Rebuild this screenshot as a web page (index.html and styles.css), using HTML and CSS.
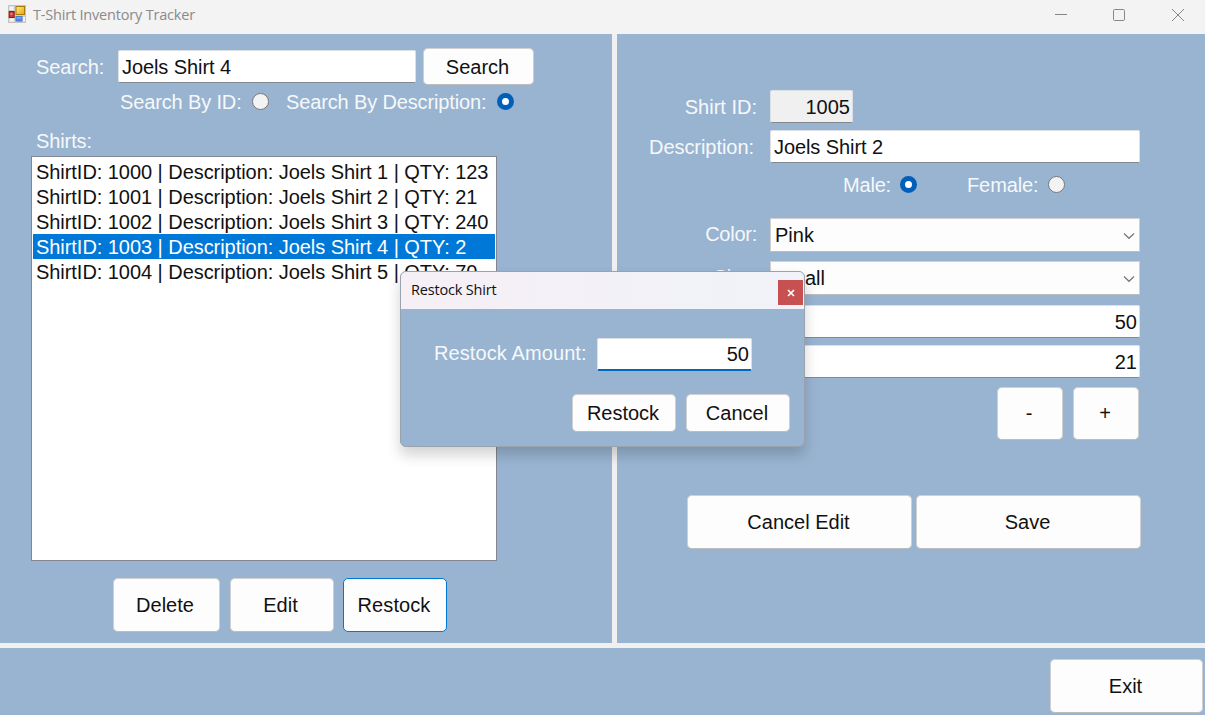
FILE: index.html
```html
<!DOCTYPE html>
<html lang="en">
<head>
<meta charset="utf-8">
<title>T-Shirt Inventory Tracker</title>
<link rel="stylesheet" href="styles.css">
</head>
<body>
<div class="window">
  <header class="titlebar">
    <svg class="app-icon" width="18" height="18" viewBox="0 0 18 18">
      <defs>
        <linearGradient id="gold" x1="0" y1="0" x2="1" y2="1"><stop offset="0" stop-color="#ffe88a"/><stop offset="1" stop-color="#e8a800"/></linearGradient>
        <linearGradient id="blue" x1="0" y1="0" x2="0" y2="1"><stop offset="0" stop-color="#8ab8f8"/><stop offset="1" stop-color="#3a74dc"/></linearGradient>
      </defs>
      <rect x="0.5" y="0.5" width="17" height="17" fill="#cfcfcf" stroke="#c4c4c4"/>
      <rect x="1.5" y="1.5" width="4" height="3.5" fill="#f4f4f4"/>
      <rect x="1.5" y="13.5" width="4.5" height="3" fill="#f4f4f4"/>
      <rect x="15" y="12" width="2" height="4.5" fill="#f4f4f4"/>
      <rect x="1.2" y="6.5" width="5" height="6" fill="#cc3a30" stroke="#8e1c16"/>
      <rect x="2.5" y="8" width="1.8" height="2" fill="#ee8a80"/>
      <rect x="8" y="1.5" width="8.5" height="8" fill="url(#gold)" stroke="#a87808"/>
      <rect x="8" y="11.5" width="6" height="4.5" fill="url(#blue)" stroke="#4a7cd0"/>
    </svg>
    <span class="title">T-Shirt Inventory Tracker</span>
    <svg class="controls" width="130" height="14" viewBox="0 0 130 14" fill="none" stroke="#868686">
      <path d="M0 7.5H12"/>
      <rect x="58.5" y="2.5" width="11" height="11" rx="1.2"/>
      <path d="M117 2L129 14M129 2L117 14"/>
    </svg>
  </header>

  <main class="panes">
    <section class="pane list-pane">
      <div class="search-row">
        <span class="label search-label">Search:</span>
        <div class="field search-field">Joels Shirt 4</div>
        <div class="button search-button">Search</div>
      </div>
      <div class="search-mode">
        <span class="label by-id">Search By ID:</span><i class="radio"></i>
        <span class="label by-desc">Search By Description:</span><i class="radio on"></i>
      </div>
      <div class="label list-label">Shirts:</div>
      <div class="listbox">
        <div class="item">ShirtID: 1000 | Description: Joels Shirt 1 | QTY: 123</div>
        <div class="item">ShirtID: 1001 | Description: Joels Shirt 2 | QTY: 21</div>
        <div class="item">ShirtID: 1002 | Description: Joels Shirt 3 | QTY: 240</div>
        <div class="item selected">ShirtID: 1003 | Description: Joels Shirt 4 | QTY: 2</div>
        <div class="item">ShirtID: 1004 | Description: Joels Shirt 5 | QTY: 70</div>
      </div>
      <div class="list-actions">
        <div class="button delete">Delete</div>
        <div class="button edit">Edit</div>
        <div class="button restock focused">Restock</div>
      </div>
    </section>

    <section class="pane form-pane">
      <div class="form">
        <span class="label">Shirt ID:</span>
        <div class="field readonly number">1005</div>
        <span class="label desc-label">Description:</span>
        <div class="field">Joels Shirt 2</div>
        <div class="gender">
          <span class="label male">Male:</span><i class="radio on"></i>
          <span class="label female">Female:</span><i class="radio"></i>
        </div>
        <span class="label narrow">Color:</span>
        <div class="combo">Pink<svg width="12" height="8" viewBox="0 0 12 8" fill="none" stroke="#777" stroke-width="1.2"><path d="M1 1.5L6 6.3L11 1.5"/></svg></div>
        <span class="label narrow">Size:</span>
        <div class="combo">Small<svg width="12" height="8" viewBox="0 0 12 8" fill="none" stroke="#777" stroke-width="1.2"><path d="M1 1.5L6 6.3L11 1.5"/></svg></div>
        <div class="field number price">50</div>
        <div class="field number quantity">21</div>
      </div>
      <div class="stepper">
        <div class="button">-</div>
        <div class="button">+</div>
      </div>
      <div class="form-actions">
        <div class="button">Cancel Edit</div>
        <div class="button">Save</div>
      </div>
    </section>
  </main>

  <footer class="footer">
    <div class="button exit">Exit</div>
  </footer>

  <div class="dialog">
    <div class="dialog-title">
      <span>Restock Shirt</span>
      <div class="close"><svg width="8" height="8" viewBox="0 0 8 8" stroke="#fff" stroke-width="1.7"><path d="M1 1L7 7M7 1L1 7"/></svg></div>
    </div>
    <div class="dialog-body">
      <div class="amount-row">
        <span class="label">Restock Amount:</span>
        <div class="field number active">50</div>
      </div>
      <div class="dialog-actions">
        <div class="button">Restock</div>
        <div class="button">Cancel</div>
      </div>
    </div>
  </div>
</div>
</body>
</html>
```

FILE: styles.css
```css
* { box-sizing: border-box; }

body {
  margin: 0;
  font-family: "Liberation Sans", Arial, sans-serif;
  font-size: 20px;
  line-height: 25px;
  color: #111;
  white-space: nowrap;
}

.window {
  position: relative;
  display: flex;
  flex-direction: column;
  width: 1205px;
  height: 715px;
  overflow: hidden;
  background: #f0f0f0;
}

.titlebar {
  display: flex;
  align-items: flex-start;
  height: 34px;
  padding: 5px 20px 0 8px;
  background: #f3f3f3;
}
.title {
  margin-left: 7px;
  font: 14.5px/20px "Open Sans", "Noto Sans", sans-serif;
  letter-spacing: -0.19px;
  color: #8a8a8a;
}
.controls { margin: 2px 0 0 auto; }

.panes {
  display: grid;
  grid-template-columns: 612px 588px;
  gap: 5px;
  height: 609px;
}
.pane { background: #99b4d1; }
.label { color: #f6f8fa; }

/* Shared controls */
.field {
  display: flex;
  align-items: center;
  height: 33px;
  padding: 1px 3px 0;
  background: #fff;
  border: 1px solid #dcdfe3;
  border-bottom-color: #84898f;
  border-radius: 2px;
  letter-spacing: -0.08px;
}
.number {
  justify-content: flex-end;
  padding-right: 2px;
  letter-spacing: 0;
}
.readonly { width: 83px; background: #f0f0f0; }
.button {
  display: flex;
  align-items: center;
  justify-content: center;
  height: 54px;
  padding-right: 2px;
  background: #fdfdfd;
  border: 1px solid #d0d0d0;
  border-bottom-color: #bcbcbc;
  border-radius: 5px;
}
.focused { border-color: #0078d4; }
.radio {
  width: 17px;
  height: 17px;
  border: 1px solid #777;
  border-radius: 50%;
  background: #f3f3f3;
}
.radio.on { border: 5.5px solid #005fb8; background: #fff; }
.combo {
  display: flex;
  align-items: center;
  justify-content: space-between;
  height: 34px;
  padding: 1px 4px 0;
  background: #fdfdfd;
  border: 1px solid #d0d0d0;
  border-bottom-color: #bcbcbc;
}

/* Left pane */
.list-pane { padding: 14px 0 0 31px; }
.search-row { display: flex; align-items: center; height: 37px; }
.search-label { width: 87px; padding: 1px 0 0 5px; letter-spacing: -0.1px; }
.search-field { width: 298px; margin-top: -1px; padding-top: 2px; }
.search-button { width: 111px; height: 37px; margin-left: 7px; padding-top: 1px; }
.search-mode {
  display: flex;
  align-items: center;
  height: 25px;
  margin-top: 5px;
  padding-left: 89px;
}
.search-mode .radio { margin-top: -3px; }
.by-id { width: 132px; letter-spacing: -0.14px; }
.by-desc { width: 211px; margin-left: 17px; letter-spacing: -0.14px; }
.list-label { margin: 14px 0 2px 5px; letter-spacing: -0.1px; }
.listbox {
  width: 466px;
  height: 405px;
  padding: 2px 1px;
  background: #fff;
  border: 1px solid #82878f;
}
.item {
  height: 25px;
  padding-left: 3px;
  line-height: 27px;
  letter-spacing: -0.05px;
}
.selected { background: #0078d7; color: #fff; }
.list-actions { display: flex; gap: 10px; margin: 17px 0 0 82px; }
.delete { width: 107px; padding-right: 3px; }
.edit { width: 104px; padding-right: 3px; }
.restock { width: 104px; margin-left: -1px; letter-spacing: 0.1px; }

/* Right pane */
.form-pane { padding-top: 56px; }
.form {
  display: grid;
  grid-template-columns: 140px 370px;
  grid-template-rows: 40px 42px 46px 43px 44px 40px 33px;
  column-gap: 13px;
  align-items: start;
}
.form > .label { padding-top: 5px; text-align: right; }
.form > .desc-label { padding-right: 3px; letter-spacing: -0.05px; }
.form > .narrow { padding-top: 4px; letter-spacing: -0.25px; }
.gender {
  grid-column: 2;
  display: flex;
  align-items: center;
  height: 25px;
  margin-top: 1px;
  padding-left: 73px;
}
.gender .radio { margin-top: -3px; }
.male { width: 57px; letter-spacing: -0.2px; }
.female { width: 81px; margin-left: 50px; letter-spacing: -0.1px; }
.price, .quantity { grid-column: 2; }
.stepper { display: flex; gap: 10px; margin: 9px 0 0 380px; }
.stepper .button { width: 66px; height: 53px; }
.form-actions { display: flex; gap: 4px; margin: 55px 0 0 70px; }
.form-actions .button { width: 225px; }

.footer {
  display: flex;
  justify-content: flex-end;
  height: 67px;
  margin-top: 5px;
  padding: 11px 2px 0 0;
  background: #99b4d1;
}
.exit { width: 153px; }

/* Modal dialog floating above both panes */
.dialog {
  position: absolute;
  left: 400px;
  top: 271px;
  width: 405px;
  height: 176px;
  border: 1px solid #9aa3ad;
  border-radius: 6px;
  background: #99b4d1;
  box-shadow: 0 8px 14px rgba(0, 0, 0, .18);
  overflow: hidden;
}
.dialog-title {
  display: flex;
  justify-content: space-between;
  height: 37px;
  padding: 8px 1px 0 10px;
  background: linear-gradient(90deg, #f6eff6, #f0f3f9);
  font: 14.5px/20px "Open Sans", "Noto Sans", sans-serif;
  letter-spacing: -0.18px;
  color: #111;
}
.close {
  display: flex;
  align-items: center;
  justify-content: center;
  width: 25px;
  height: 25px;
  background: #c75050;
}
.dialog-body { padding: 29px 14px 0 33px; }
.amount-row { display: flex; align-items: center; gap: 10px; }
.amount-row .label { width: 153px; margin-top: -2px; letter-spacing: 0.1px; }
.active { width: 155px; border-bottom: 2px solid #0067c0; }
.dialog-actions { display: flex; justify-content: flex-end; gap: 10px; margin-top: 23px; }
.dialog-actions .button { width: 104px; height: 38px; }
```
